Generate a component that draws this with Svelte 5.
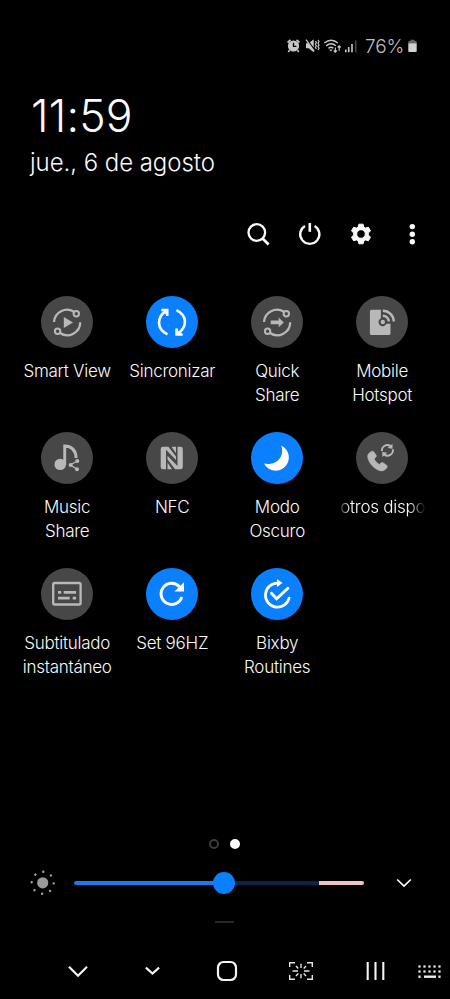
<script>
  const tiles = [
    { icon: 'smartview', lines: ['Smart View'], on: false },
    { icon: 'sync', lines: ['Sincronizar'], on: true },
    { icon: 'quickshare', lines: ['Quick', 'Share'], on: false },
    { icon: 'hotspot', lines: ['Mobile', 'Hotspot'], on: false },
    { icon: 'music', lines: ['Music', 'Share'], on: false },
    { icon: 'nfc', lines: ['NFC'], on: false },
    { icon: 'moon', lines: ['Modo', 'Oscuro'], on: true },
    { icon: 'call', lines: ['otros dispos'], on: false, marquee: true },
    { icon: 'subtitle', lines: ['Subtitulado', 'instantáneo'], on: false },
    { icon: 'refresh', lines: ['Set 96HZ'], on: true },
    { icon: 'bixby', lines: ['Bixby', 'Routines'], on: true },
  ];
  const rays = [0, 45, 90, 135, 180, 225, 270, 315];
  const keyRows = [1.5, 6.5];
  const keyCols = [1.5, 6.5, 11.5, 16.5, 21.5];
</script>

<div class="screen">
  <div class="status">
    <svg width="72" height="18" viewBox="0 0 72 18" fill="none" stroke="#c8c8c8">
      <g>
        <circle cx="8.5" cy="9" r="5.6" fill="#c8c8c8" stroke="none" />
        <path d="M2.600 5.500 5.500 2.900M14.400 5.500 11.500 2.900M4.500 13.300l-1.200 1.600M12.500 13.300l1.200 1.600" stroke-width="1.700" />
        <path d="M8.500 5.800v3.600h2.900" stroke="#000" stroke-width="1.300" />
      </g>
      <g>
        <path d="M21 6.300h2.700l5-4v13l-5-4H21z" fill="#c8c8c8" stroke="none" />
        <path d="m22 3 8 10.500" stroke="#000" stroke-width="1.600" />
        <path d="m21 2.700 8.200 11.600" stroke-width="1.300" />
        <path d="m30.400 4 1 1.500-1 1.600 1 1.600-1 1.600 1 1.600M33 3l1 1.600-1 1.600 1 1.700-1 1.700 1 1.700-1 1.700" stroke-width="1.200" />
      </g>
      <g stroke-width="1.500">
        <path d="M39.300 6q7-5.500 13.600 0M41.300 8.800q4.800-4 9.500 0M43.500 11.300q2.500-2 4.800 0" />
        <path d="m44.300 12.600 1.600 2 1.600-2z" fill="#c8c8c8" stroke="none" />
        <path d="M50.300 10.500v4.700M48.800 13.500l1.500 1.700 1.500-1.700M54.200 8.800v5M52.700 10.500l1.500-1.700 1.500 1.700" stroke-width="1.200" />
      </g>
      <g stroke-width="1.600">
        <path d="M60.800 12.500v2.800M63.700 10v5.300M67 7v8.300" />
        <path d="M70.800 3.500v11.800" stroke="#555" stroke-width="1.300" />
      </g>
    </svg>
    <span class="percent">76%</span>
    <svg width="9" height="14" viewBox="0 0 9 14">
      <path d="M2.5 0.8h4V2H8a.7.7 0 0 1 .7.7V4.5H.3V2.7A.7.7 0 0 1 1 2h1.5z" fill="#666" />
      <path d="M.3 4.3h8.4v8a.8.8 0 0 1-.8.8H1.1a.8.8 0 0 1-.8-.8z" fill="#d0d0d0" />
    </svg>
  </div>

  <header>
    <div class="time">11:59</div>
    <div class="date">jue., 6 de agosto</div>
  </header>

  <div class="actions">
    <svg width="26" height="26" viewBox="0 0 26 26" fill="none" stroke="#fafafa" stroke-width="2.3">
      <circle cx="11.8" cy="11.5" r="8.3" /><path d="m17.6 17.400 6 6" stroke-width="2.8" />
    </svg>
    <svg width="26" height="26" viewBox="0 0 26 26" fill="none" stroke="#fafafa">
      <path d="M9 4.900A9.600 9.600 0 1 0 18.600 4.900" stroke-width="2.3" /><path d="M13.800 2v8.800" stroke-width="2.600" />
    </svg>
    <svg width="26" height="26" viewBox="0 0 26 26" fill="#fafafa">
      <path fill-rule="evenodd" stroke="#fafafa" stroke-width="1" stroke-linejoin="round" d="M10.9 3.2h4.2l.7 2.9 1.7 1 2.9-.9 2.1 3.7-2.2 2.1v2l2.2 2.1-2.1 3.7-2.9-.9-1.7 1-.7 2.9h-4.2l-.7-2.9-1.7-1-2.9.9-2.1-3.7L5.700 14v-2L3.500 9.900l2.100-3.700 2.900.9 1.700-1zM13 8.700a4.300 4.300 0 1 0 0 8.600 4.300 4.300 0 0 0 0-8.600z" />
    </svg>
    <svg width="26" height="26" viewBox="0 0 26 26" fill="#fafafa">
      <circle cx="13.300" cy="5.600" r="2.700" /><circle cx="13.300" cy="13.200" r="2.700" /><circle cx="13.300" cy="20.800" r="2.700" />
    </svg>
  </div>

  <main>
    {#each tiles as tile}
      <div class="tile">
        <div class="disc" class:on={tile.on}>
          <svg width="52" height="52" viewBox="0 0 52 52" fill="none" stroke="currentColor" stroke-width="2.3">
            {#if tile.icon === 'smartview' || tile.icon === 'quickshare'}
              <path d="M13 26A13 13 0 0 1 33 15.8M39.2 26.2A13 13 0 0 1 19 37" />
              <circle cx="35.3" cy="17.7" r="2.7" stroke-width="2" />
              <circle cx="16.6" cy="35.2" r="2.7" stroke-width="2" />
              {#if tile.icon === 'smartview'}
                <path d="M22.8 20.9v11.2l9.2-5.6z" fill="currentColor" stroke="none" />
              {:else}
                <path d="M19.7 24.5h8v-2.9l5.1 4.8-5.1 4.8v-2.9h-8z" fill="currentColor" stroke="none" />
              {/if}
            {:else if tile.icon === 'sync'}
              <path d="M21.4 38.400C10.500 33 10.500 21.500 19.900 15.200M30.400 14.200C41.500 19.500 41.500 31 32 37.400" stroke-width="2.6" />
              <path d="M15.300 12.700h7.200v7.200h-2.400l-.5-2.200-2-2.200-2.300-.3zM29.300 32.500v7.300h7.300v-2.400l-2.600-.4-1.700-1.700-.4-2.800z" fill="currentColor" stroke="none" />
            {:else if tile.icon === 'hotspot'}
              <path d="M15.6 13.7h9.3v8.5a4.2 4.2 0 1 0 5.6 5.6h4v9.6a1.7 1.7 0 0 1-1.7 1.7H15.6a1.7 1.7 0 0 1-1.7-1.7V15.4a1.7 1.7 0 0 1 1.7-1.7z" fill="currentColor" stroke="none" />
              <circle cx="26.8" cy="26" r="2.2" fill="currentColor" stroke="none" />
              <path d="M26.8 14.7a11 11 0 0 1 11 10.8M26.8 19.7a6 6 0 0 1 6 5.8" stroke-width="2.4" />
            {:else if tile.icon === 'music'}
              <circle cx="19.2" cy="32.4" r="5.7" fill="currentColor" stroke="none" />
              <path d="M23.7 33V14c6.8.3 11.200 4.400 11.400 12" stroke-width="2.900" />
              <path d="m36.200 29-6.800 4 6.500 4" stroke-width="1.400" />
              <g fill="currentColor" stroke="none"><circle cx="36.300" cy="29" r="2" /><circle cx="29.600" cy="33" r="2" /><circle cx="36" cy="37.200" r="2" /></g>
            {:else if tile.icon === 'nfc'}
              <g fill="currentColor" stroke="none">
                <path d="M17 14.700h5.400L30 24.500v3.600l-10-10.300V37.200h-3a2.300 2.300 0 0 1-2.300-2.300V17a2.300 2.300 0 0 1 2.300-2.300z" />
                <path d="M34.500 37.200h-5.400L21.500 27.400v-3.600l10 10.300V14.700h3a2.300 2.300 0 0 1 2.300 2.300v17.900a2.300 2.300 0 0 1-2.300 2.300z" />
                <path d="M25.500 14.700H30v6.600zM21.500 30.600v6.600H26z" />
              </g>
            {:else if tile.icon === 'moon'}
              <path d="M30.3 13.5A13.2 13.2 0 1 1 13 31.6C25.5 34 34 25 30.3 13.5z" fill="currentColor" stroke="none" />
            {:else if tile.icon === 'call'}
              <path d="M15.6 19.4c-3 1.3-4.4 3.6-3.8 6.2 1.4 6 6.2 11.2 11.8 13 3 .9 5.600-.4 7.4-3.200.5-.8.300-1.700-.4-2.200l-3.600-2.500c-.8-.5-1.500-.4-2.100.2l-1.600 1.600c-2.200-1.300-4.100-3.300-5.200-5.700l1.700-1.500c.6-.6.7-1.200.4-2l-2.300-3.300c-.5-.8-1.300-1-2.300-.6z" fill="currentColor" stroke="currentColor" stroke-width=".6" />
              <path d="M26 19.200a5.400 5.400 0 0 1 8.700-5M36.800 17.200a5.400 5.400 0 0 1-8.700 5.200" stroke-width="1.900" />
              <path d="M36.500 11.700v5l-5-.8zM26.300 25v-5l5 .8z" fill="currentColor" stroke="none" />
            {:else if tile.icon === 'subtitle'}
              <rect x="12.200" y="15" width="27.400" height="21.500" rx="1.500" />
              <path d="M17 24.300h3.200M22.700 24.300h12.400M17 30.200h11.700M31.700 30.200h3.400" stroke-width="2.700" />
            {:else if tile.icon === 'refresh'}
              <path d="M35.800 29A10.600 10.600 0 1 1 33.500 18.700" stroke-width="2.900" />
              <path d="M38 14.200v9.300h-9.600z" fill="currentColor" stroke="none" />
            {:else if tile.icon === 'bixby'}
              <path d="M38.100 30A12 12 0 1 1 26.500 15.200" stroke-width="2.700" stroke-linecap="round" />
              <path d="m26 11 5.400 4-5.400 4z" fill="currentColor" stroke="none" />
              <path d="m20.500 25.300 5.100 5.400 11.300-10.500" stroke-width="2.900" stroke-linecap="round" />
            {/if}
          </svg>
        </div>
        <div class="label" class:marquee={tile.marquee}>
          {#each tile.lines as line}<span>{line}</span>{/each}
        </div>
      </div>
    {/each}
  </main>

  <div class="pager"><i></i><i class="current"></i></div>

  <div class="brightness">
    <svg width="26" height="26" viewBox="0 0 26 26" fill="#a6a6a6">
      <circle cx="12.700" cy="12.800" r="5.600" fill="#999" />
      {#each rays as angle}
        <circle cx="12.700" cy="1.800" r="1.200" transform="rotate({angle + 3} 12.7 12.8)" />
      {/each}
    </svg>
    <div class="track"><div class="fill"></div><div class="rest"></div><div class="hot"></div><b></b></div>
    <svg class="expand" width="16" height="10" viewBox="0 0 16 10" fill="none" stroke="#fff" stroke-width="1.700"><path d="m1.200 1.500 6.800 6.600 6.800-6.600" /></svg>
  </div>

  <div class="handle"></div>

  <nav>
    <svg width="20" height="13" viewBox="0 0 20 13" fill="none" stroke="#f4f4f4" stroke-width="2.200"><path d="m1 1.800 9 8.900 9-8.900" /></svg>
    <svg width="15" height="10" viewBox="0 0 15 10" fill="none" stroke="#f4f4f4" stroke-width="2.100"><path d="m.9 1.600 6.600 6 6.600-6" /></svg>
    <svg width="22" height="22" viewBox="0 0 22 22" fill="none" stroke="#f4f4f4" stroke-width="2.200"><rect x="2" y="2" width="18" height="18" rx="5.500" /></svg>
    <svg width="26" height="20" viewBox="0 0 26 20" fill="none" stroke="#e4e4e4" stroke-width="1.400">
      <path d="M1.700 6V1.700H7M19 1.700h5.300V6M24.300 14v4.300H19M7 18.300H1.700V14" />
      <path d="M13 2.800V7M13 13v4.200M4.500 10H10M16 10h5.500M8 5l2.300 2.400M18 5l-2.300 2.400M8 15l2.300-2.400M18 15l-2.300-2.400" />
    </svg>
    <svg width="19" height="20" viewBox="0 0 19 20" stroke="#f4f4f4" stroke-width="2.100"><path d="M1.700 1v18M9.500 1v18M17.300 1v18" /></svg>
    <svg class="keyboard" width="24" height="15" viewBox="0 0 24 15" fill="#eee">
      {#each keyRows as y}
        {#each keyCols as x}<rect x={x - 1.1} y={y - 1.1} width="2.200" height="2.200" />{/each}
      {/each}
      <rect x=".4" y="10.500" width="2.200" height="2.400" /><rect x="6" y="10.500" width="12" height="2.400" /><rect x="20.400" y="10.500" width="2.200" height="2.400" />
    </svg>
  </nav>
</div>

<style>
  :global(body) { background: #000; }
  .screen {
    box-sizing: border-box;
    width: 450px;
    height: 999px;
    overflow: hidden;
    display: flex;
    flex-direction: column;
    background: #000;
    color: #fafafa;
    font-family: Inter, "Liberation Sans", sans-serif;
    font-weight: 300;
  }
  svg { display: block; flex: none; }
  .status {
    display: flex;
    align-items: center;
    height: 20px;
    margin-top: 36px;
    padding-left: 285px;
    color: #bcbcbc;
  }
  .percent { width: 41px; margin: 0 2px 0 8px; font-size: 19px; letter-spacing: -.1px; white-space: nowrap; }
  header { padding: 35px 0 0 30px; white-space: nowrap; }
  .time { height: 50px; line-height: 50px; font-size: 44.500px; letter-spacing: .2px; padding-left: 1px; }
  .date { height: 36px; line-height: 36px; margin-top: 4px; font-size: 24px; letter-spacing: -.05px; }
  .actions { display: flex; justify-content: space-between; margin: 40px 25px 0 245px; }
  main {
    display: grid;
    grid-template-columns: repeat(4, 105px);
    grid-auto-rows: 135.800px;
    height: 408px;
    margin: 49px 0 0 14.700px;
  }
  .tile { display: flex; flex-direction: column; align-items: center; }
  .disc { width: 52.400px; height: 52.400px; border-radius: 50%; background: #474747; color: #b8b8b8; }
  .disc.on { background: #0a80ff; color: #fff; }
  .label {
    display: flex;
    flex-direction: column;
    align-items: center;
    margin-top: 11px;
    font-size: 17px;
    letter-spacing: -.25px;
    line-height: 24px;
    white-space: nowrap;
  }
  .marquee {
    box-sizing: border-box;
    width: 88px;
    padding-left: 2px;
    overflow: hidden;
    align-items: flex-start;
    mask-image: linear-gradient(90deg, transparent 0, #000 12px, #000 70px, transparent 88px);
  }
  .pager { display: flex; justify-content: center; gap: 11px; margin: 135px 1px 0 0; height: 11px; }
  .pager i { box-sizing: border-box; width: 10px; height: 10px; border: 2px solid #3c3c3c; border-radius: 50%; }
  .pager .current { background: #fff; border-color: #fff; }
  .brightness { display: flex; align-items: center; height: 26px; margin-top: 20px; padding-left: 30px; }
  .track { position: relative; display: flex; width: 290px; height: 4px; margin-left: 18px; border-radius: 2px; }
  .fill { width: 150px; background: #187af0; border-radius: 2px 0 0 2px; }
  .rest { width: 95px; background: #0c2546; }
  .hot { width: 45px; background: #f0c3c4; border-radius: 0 2px 2px 0; }
  .track b { position: absolute; left: 139px; top: -9px; width: 22px; height: 22px; border-radius: 50%; background: #0a80ff; }
  .expand { margin-left: 32px; }
  .handle { width: 19px; height: 2px; margin: 25px 0 0 215px; background: #292929; }
  nav {
    display: grid;
    grid-template-columns: repeat(5, 74.500px) 36px;
    align-items: center;
    justify-items: center;
    height: 24px;
    margin: 36px 0 0 40.500px;
  }
  .keyboard { justify-self: start; margin: 2px 0 0 5px; }
</style>
